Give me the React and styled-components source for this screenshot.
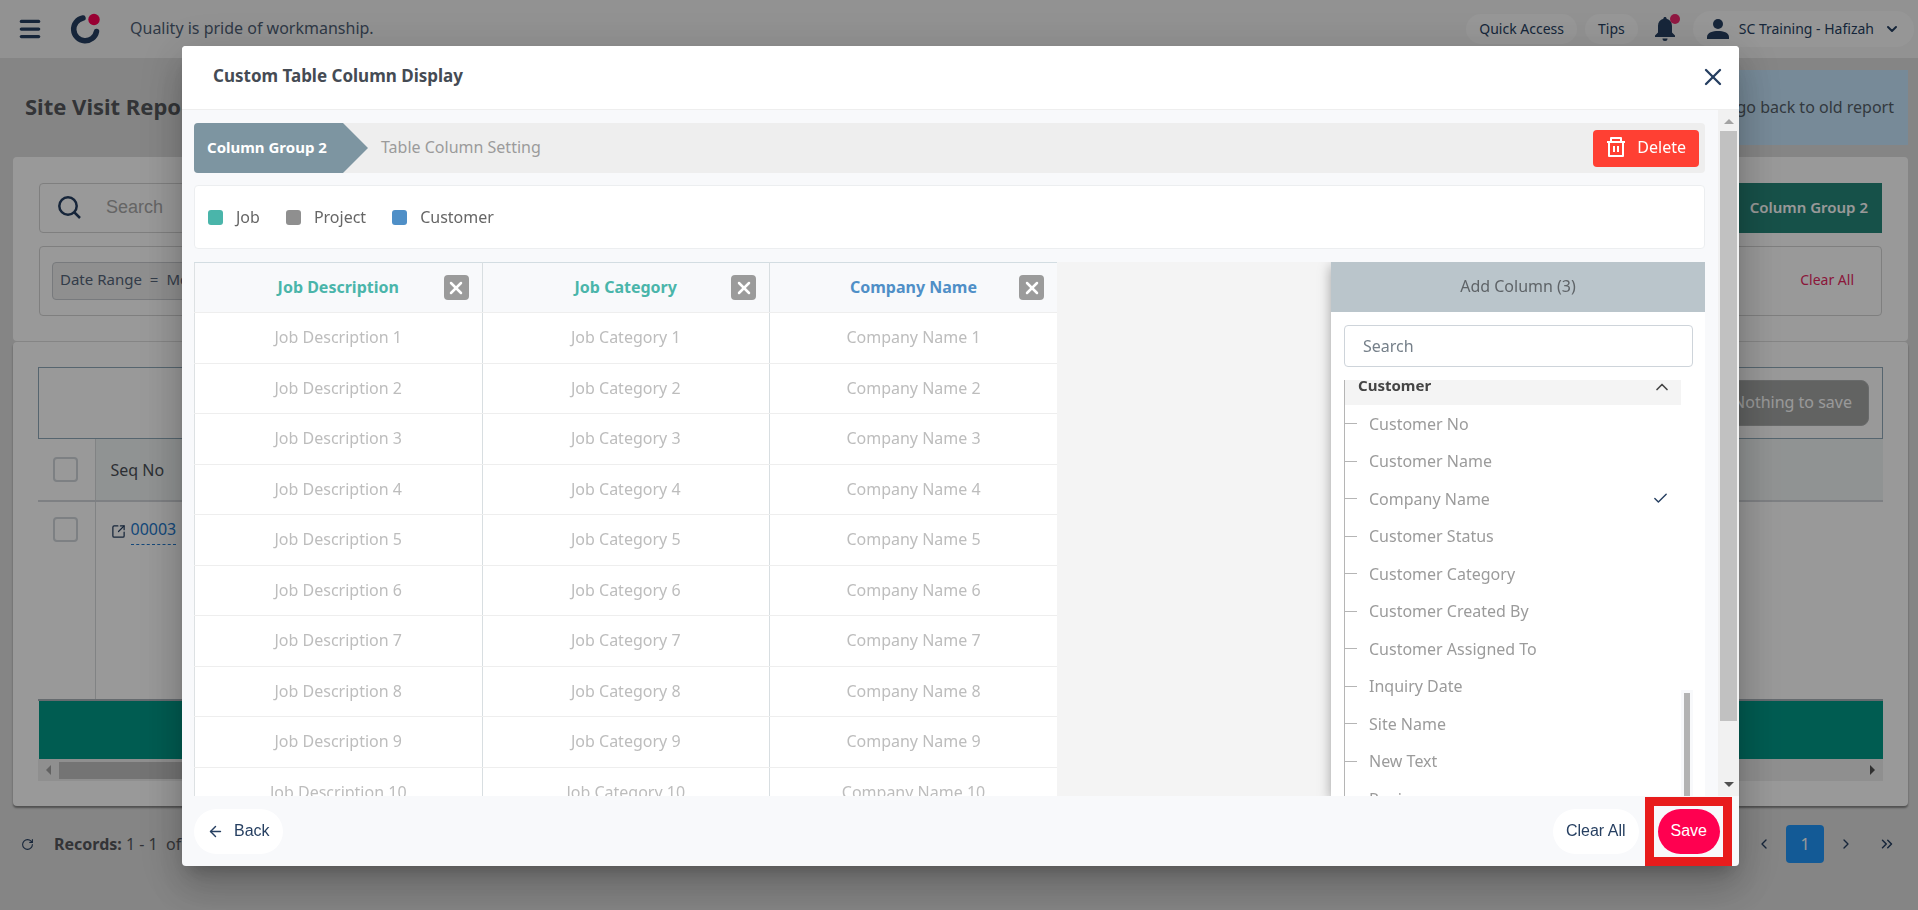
import styled, { createGlobalStyle } from 'styled-components';
import {
  ArrowLeft,
  Check,
  ChevronDown,
  ChevronLeft,
  ChevronRight,
  ChevronsRight,
  ChevronUp,
  Menu,
  RotateCw,
  SquareArrowOutUpRight,
  X,
} from 'lucide-react';

let GlobalStyle = createGlobalStyle`
  * {
    box-sizing: border-box;
  }
  body {
    margin: 0;
    background: #dedede;
    color: #4a4f57;
    font-family: 'Noto Sans', sans-serif;
    font-size: 16px;
    line-height: 24px;
  }
  button, input {
    font-family: inherit;
    font-size: 16px;
  }
  button {
    border: 0;
    padding: 0;
    cursor: pointer;
  }
`;

/* ---------- page behind the dialog ---------- */

let Page = styled.div`
  height: 100vh;
  overflow: hidden;
`;

let TopBar = styled.header`
  display: flex;
  align-items: center;
  height: 58px;
  padding: 0 4px 0 17px;
  background: #f4f4f4;
  color: #263f61;
`;

let IconButton = styled.button`
  display: flex;
  align-items: center;
  justify-content: center;
  background: none;
  color: #263f61;
`;

let Logo = styled.svg`
  width: 32px;
  height: 32px;
  margin: 0 28px 0 27px;
`;

let Tagline = styled.div`
  flex: 1;
  padding-bottom: 2px;
  color: #4f5f75;
`;

let TopActions = styled.div`
  display: flex;
  align-items: center;
`;

let Pill = styled.button`
  height: 30px;
  margin-right: 8px;
  padding: 0 13px 2px;
  border-radius: 15px;
  background: #fbfbfb;
  color: #263f61;
  font-size: 14px;
`;

let BellButton = styled(IconButton)`
  position: relative;
  margin: 0 18px 0 9px;

  &::after {
    content: '';
    position: absolute;
    top: -3px;
    right: -5px;
    width: 10px;
    height: 10px;
    border-radius: 50%;
    background: #f0286e;
  }
`;

let UserButton = styled.button`
  display: flex;
  align-items: center;
  gap: 10px;
  height: 36px;
  padding: 0 14px;
  border-radius: 18px;
  background: #fbfbfb;
  color: #263f61;
  font-size: 14px;

  span {
    padding-bottom: 2px;
  }
`;

let TitleRow = styled.div`
  display: flex;
  justify-content: space-between;
  align-items: center;
  padding: 12px 10px 12px 25px;
`;

let PageTitle = styled.h1`
  margin: 0;
  padding-bottom: 4px;
  font-size: 22px;
  color: #55585c;
`;

let OldReport = styled.a`
  display: flex;
  align-items: center;
  height: 75px;
  padding: 0 14px 2px;
  background: #c6e6fd;
  color: #555f69;
  text-decoration: none;
`;

let Card = styled.section`
  margin: 0 10px 1px 13px;
  border-radius: 4px;
  background: #fff;
`;

let FilterCard = styled(Card)`
  padding: 26px 26px 25px;
`;

let TableCard = styled(Card)`
  padding: 25px;
  box-shadow: 0 2px 2px rgba(0, 0, 0, 0.4);
`;

let SearchRow = styled.div`
  display: flex;
  margin-bottom: 13px;
`;

let SearchField = styled.label`
  flex: 1;
  display: flex;
  align-items: center;
  gap: 25px;
  height: 50px;
  padding: 0 18px 2px;
  border: 1px solid #d4d4d4;
  border-radius: 4px;
  color: #263f61;

  input {
    flex: 1;
    padding: 0;
    border: 0;
    outline: 0;
    background: none;
    font-family: 'Liberation Sans', sans-serif;
    font-size: 18px;
  }
  input::placeholder {
    color: #a8a8a8;
  }
`;

let GroupButton = styled.button`
  padding: 0 14px 2px;
  background: #26877a;
  color: #fff;
  font-size: 15px;
  font-weight: 600;
`;

let FilterBox = styled.div`
  display: flex;
  align-items: center;
  justify-content: space-between;
  height: 70px;
  padding: 0 27px 0 12px;
  border: 1px solid #d4d4d4;
  border-radius: 4px;
`;

let Chip = styled.div`
  display: flex;
  gap: 8px;
  height: 38px;
  padding: 4px 7px;
  border: 1px solid #c9ccd0;
  border-radius: 4px;
  background: #eee;
  color: #55657a;
  font-size: 15px;
`;

let ClearFilters = styled.button`
  padding-bottom: 4px;
  background: none;
  color: #e8275f;
  font-size: 14px;
`;

let SaveBar = styled.div`
  display: flex;
  justify-content: flex-end;
  padding: 12px 13px;
  border: 1px solid #8fa9b9;
`;

let NothingButton = styled.button`
  height: 46px;
  padding: 0 16px 2px;
  border: 1px solid #b0b2b2;
  border-radius: 8px;
  background: #a3a5a4;
  color: #fff;
`;

let ReportTable = styled.table`
  width: 100%;
  border-collapse: collapse;
  border-bottom: 2px solid #aab2ba;

  th, td {
    padding: 0 15px;
    text-align: left;
    font-weight: 400;
  }
  th {
    height: 62px;
    border-bottom: 2px solid #d2d5da;
    background: #f1f5f5;
  }
  td {
    height: 199px;
    padding-top: 15px;
    vertical-align: top;
  }
  th:first-child, td:first-child {
    width: 57px;
    border-right: 1px solid #d7dbdd;
    background: #fff;
    line-height: 0;
  }
`;

let Checkbox = styled.input`
  appearance: none;
  width: 25px;
  height: 25px;
  margin: 0;
  border: 2px solid #d0d5db;
  border-radius: 4px;
`;

let SeqLink = styled.a`
  display: inline-flex;
  align-items: center;
  gap: 5px;
  color: #2378cb;
  text-decoration: none;

  svg {
    color: #263f61;
  }
  span {
    padding-bottom: 3px;
    border-bottom: 1px dashed #2378cb;
  }
`;

let GreenBar = styled.div`
  height: 58px;
  margin-left: 1px;
  background: #009988;
`;

let HScroll = styled.div`
  display: flex;
  align-items: center;
  gap: 8px;
  height: 22px;
  padding: 0 8px;
  background: #eee;
`;

let HThumb = styled.div`
  width: 900px;
  height: 17px;
  margin-right: auto;
  background: #c1c1c1;
`;

let Arrow = styled.i`
  width: 0;
  height: 0;
  border: 5px solid transparent;
  ${(p) => p.$dir === 'left' && 'border-left: 0; border-right-color: #a3a3a3;'}
  ${(p) => p.$dir === 'right' && 'border-right: 0; border-left-color: #505050;'}
  ${(p) => p.$dir === 'up' && 'border-top: 0; border-bottom-color: #a3a3a3;'}
  ${(p) => p.$dir === 'down' && 'border-bottom: 0; border-top-color: #505050;'}
`;

let Pager = styled.div`
  display: flex;
  align-items: center;
  justify-content: space-between;
  padding: 18px 12px 18px 21px;
  color: #55585c;
`;

let PagerGroup = styled.div`
  display: flex;
  align-items: center;
  gap: ${(p) => p.$gap}px;
`;

let LastButton = styled(IconButton)`
  width: 38px;
`;

let PageNumber = styled.button`
  width: 38px;
  height: 38px;
  border-radius: 4px;
  background: #2196fa;
  color: #fff;
`;

/* ---------- dialog ---------- */

let Backdrop = styled.div`
  position: fixed;
  inset: 0;
  display: flex;
  padding: 46px 179px 44px 182px;
  background: rgba(0, 0, 0, 0.4);
`;

let Dialog = styled.div`
  flex: 1;
  display: flex;
  flex-direction: column;
  min-width: 0;
  border-radius: 4px;
  overflow: hidden;
  background: #f8f9fb;
  box-shadow: 0 11px 15px -7px rgba(0, 0, 0, 0.2),
    0 24px 38px 3px rgba(0, 0, 0, 0.14), 0 9px 46px 8px rgba(0, 0, 0, 0.12);
`;

let DialogHeader = styled.div`
  display: flex;
  align-items: center;
  justify-content: space-between;
  height: 64px;
  padding: 0 12px 2px 31px;
  border-bottom: 1px solid #eee;
  background: #fff;
`;

let DialogTitle = styled.h2`
  margin: 0;
  padding-bottom: 2px;
  font-size: 17px;
  color: #454b54;
`;

let DialogBody = styled.div`
  flex: 1;
  display: flex;
  min-height: 0;
`;

let Content = styled.div`
  flex: 1;
  display: flex;
  flex-direction: column;
  min-width: 0;
  padding: 13px 13px 0 12px;
`;

let Steps = styled.div`
  display: flex;
  align-items: center;
  height: 50px;
  padding-right: 6px;
  border-radius: 4px;
  background: #eee;
`;

let CurrentStep = styled.div`
  display: flex;
  align-items: center;
  height: 50px;
  width: 174px;
  padding: 0 0 2px 13px;
  border-radius: 4px 0 0 4px;
  background: #7d95a1;
  clip-path: polygon(0 0, 149px 0, 100% 50%, 149px 100%, 0 100%);
  color: #fff;
  font-size: 15px;
  font-weight: 700;
`;

let NextStep = styled.div`
  flex: 1;
  padding: 0 0 2px 13px;
  color: #9b9b9b;
`;

let DeleteButton = styled.button`
  display: flex;
  align-items: center;
  gap: 11px;
  height: 37px;
  padding: 0 13px 2px;
  border-radius: 4px;
  background: #ff4033;
  color: #fff;
`;

let Legend = styled.div`
  display: flex;
  align-items: center;
  gap: 26px;
  height: 64px;
  margin: 12px 0 13px;
  padding: 0 13px;
  border: 1px solid #eceef0;
  border-radius: 4px;
  background: #fff;
  color: #666;
`;

let LegendItem = styled.div`
  display: flex;
  align-items: center;
  gap: 13px;

  &::before {
    content: '';
    width: 15px;
    height: 15px;
    border-radius: 3px;
    background: ${(p) => p.$color};
  }
`;

let Columns = styled.div`
  flex: 1;
  display: flex;
  min-height: 0;
  overflow: hidden;
  background: #f4f4f4;
`;

let Preview = styled.div`
  flex: 1;
  min-width: 0;
`;

let PreviewTable = styled.table`
  table-layout: fixed;
  width: 863px;
  border-collapse: collapse;
  border-top: 1px solid #d3dde2;
  border-left: 1px solid #dde1e3;
  background: #fff;
  color: #bdbdbd;

  th, td {
    height: 51px;
    padding: 0 0 2px;
    border-bottom: 1px solid #eee;
    text-align: center;
  }
  th + th, td + td {
    border-left: 1px solid #d8dee1;
  }
  th {
    height: 50px;
    padding: 0;
    background: #f8f9fb;
  }
  tbody tr:nth-child(even) td {
    height: 50px;
  }
`;

let ColumnHead = styled.div`
  display: grid;
  grid-template-columns: 1fr auto 1fr;
  align-items: center;
  padding: 0 13px;
  color: ${(p) => p.$color};

  span {
    grid-column: 2;
    padding-bottom: 2px;
  }
`;

let RemoveButton = styled.button`
  justify-self: end;
  display: flex;
  align-items: center;
  justify-content: center;
  width: 25px;
  height: 25px;
  border-radius: 4px;
  background: #9b9b9b;
  color: #fff;
`;

let Side = styled.aside`
  width: 374px;
  background: #fff;
  box-shadow: 0 4px 12px rgba(0, 0, 0, 0.35);
`;

let SideTitle = styled.div`
  height: 50px;
  background: #bac5cb;
  color: #5f6468;
  line-height: 48px;
  text-align: center;
`;

let SideSearch = styled.input`
  display: block;
  width: 349px;
  height: 42px;
  margin: 13px;
  padding: 0 18px;
  border: 1px solid #ced4da;
  border-radius: 4px;

  &::placeholder {
    color: #76808a;
  }
`;

let SideScroll = styled.div`
  display: flex;
  margin: 0 12px 0 13px;
`;

let Tree = styled.ul`
  flex: 1;
  margin: 0;
  padding: 0;
  border-left: 1px solid #b5b5b5;
  list-style: none;
  color: #9b9b9b;
`;

let TreeGroup = styled.button`
  display: flex;
  align-items: flex-end;
  justify-content: space-between;
  width: 100%;
  height: 25px;
  padding: 0 9px 8px 13px;
  background: #f4f4f4;
  color: #444;
  font-size: 15px;
  font-weight: 700;
  line-height: 24px;
`;

let TreeItem = styled.li`
  display: flex;
  align-items: center;
  height: 37px;
  padding: 0 12px 1px 0;

  &:nth-child(even) {
    height: 38px;
  }
  &::before {
    content: '';
    width: 12px;
    height: 1px;
    margin-right: 12px;
    background: #b5b5b5;
  }
  svg {
    margin-left: auto;
    color: #263f61;
  }
`;

let SideTrack = styled.div`
  width: 12px;
  height: 300px;
  margin-top: 310px;
  padding: 3px 3px 0;
  background: #f8f9fb;

  &::before {
    content: '';
    display: block;
    height: 100%;
    background: #b3b3b3;
  }
`;

let VScroll = styled.div`
  display: flex;
  flex-direction: column;
  align-items: center;
  width: 21px;
  padding: 9px 2px;
  background: #f1f1f1;
`;

let VThumb = styled.div`
  width: 17px;
  height: 590px;
  margin: 7px 0 auto;
  background: #c1c1c1;
`;

let DialogFooter = styled.div`
  display: flex;
  align-items: center;
  height: 70px;
  padding: 0 19px 0 12px;
`;

let RoundButton = styled.button`
  display: flex;
  align-items: center;
  gap: 10px;
  height: 45px;
  padding: 0 13px;
  border-radius: 23px;
  background: ${(p) => (p.$primary ? '#ff0050' : '#fff')};
  color: ${(p) => (p.$primary ? '#fff' : '#263f61')};
  font-family: 'Liberation Sans', sans-serif;
`;

let FooterRight = styled.div`
  display: flex;
  gap: 19px;
  margin-left: auto;
`;

let Highlight = styled.div`
  position: relative;

  &::after {
    content: '';
    position: absolute;
    inset: -12px -12px -12px -13px;
    border: 9px solid #e81c1c;
    pointer-events: none;
  }
`;

let teal = '#4ab5aa';
let blue = '#4f8fc7';

let columns = [
  { name: 'Job Description', color: teal },
  { name: 'Job Category', color: teal },
  { name: 'Company Name', color: blue },
];

let rows = [1, 2, 3, 4, 5, 6, 7, 8, 9, 10];

let fields = [
  'Customer No',
  'Customer Name',
  'Company Name',
  'Customer Status',
  'Customer Category',
  'Customer Created By',
  'Customer Assigned To',
  'Inquiry Date',
  'Site Name',
  'New Text',
  'Region',
];

function Header() {
  return (
    <TopBar>
      <IconButton aria-label="Menu">
        <Menu size={26} strokeWidth={3} />
      </IconButton>
      <Logo viewBox="0 0 32 32">
        <path
          d="M13 5A11.500 11.500 0 1 0 26.500 18.500"
          fill="none"
          stroke="#263f61"
          strokeWidth="5.500"
          strokeLinecap="round"
        />
        <circle cx="24" cy="6.500" r="5.700" fill="#ff0055" />
      </Logo>
      <Tagline>Quality is pride of workmanship.</Tagline>
      <TopActions>
        <Pill>Quick Access</Pill>
        <Pill>Tips</Pill>
        <BellButton aria-label="Notifications">
          <svg width="20" height="24" viewBox="0 0 20 24" fill="currentColor">
            <path d="M10 0c1 0 1.600.7 1.600 1.700C15 2.500 17 5 17 9v6.500l3 3V20H0v-1.500l3-3V9c0-4 2-6.500 5.400-7.300C8.400.7 9 0 10 0zM7.500 21.500h5A2.500 2.500 0 0 1 10 24a2.500 2.500 0 0 1-2.500-2.500z" />
          </svg>
        </BellButton>
        <UserButton>
          <svg width="22" height="20" viewBox="0 0 22 20" fill="currentColor">
            <circle cx="11" cy="5" r="5" />
            <path d="M0 20v-2c0-4.500 6-6 11-6s11 1.500 11 6v2z" />
          </svg>
          <span>SC Training - Hafizah</span>
          <ChevronDown size={16} strokeWidth={3} />
        </UserButton>
      </TopActions>
    </TopBar>
  );
}

function Report() {
  return (
    <>
      <TitleRow>
        <PageTitle>Site Visit Report</PageTitle>
        <OldReport href="#old">Click here to go back to old report</OldReport>
      </TitleRow>
      <FilterCard>
        <SearchRow>
          <SearchField>
            <svg
              width="23"
              height="24"
              viewBox="0 0 23 24"
              fill="none"
              stroke="currentColor"
              strokeWidth="2.500"
            >
              <circle cx="10" cy="11" r="8.700" />
              <path d="M16 17l6 6" />
            </svg>
            <input placeholder="Search" aria-label="Search reports" />
          </SearchField>
          <GroupButton>Column Group 2</GroupButton>
        </SearchRow>
        <FilterBox>
          <Chip>
            <span>Date Range</span>
            <span>=</span>
            <span>Month to date</span>
          </Chip>
          <ClearFilters>Clear All</ClearFilters>
        </FilterBox>
      </FilterCard>
      <TableCard>
        <SaveBar>
          <NothingButton>Nothing to save</NothingButton>
        </SaveBar>
        <ReportTable>
          <thead>
            <tr>
              <th>
                <Checkbox type="checkbox" aria-label="Select all" />
              </th>
              <th>Seq No</th>
            </tr>
          </thead>
          <tbody>
            <tr>
              <td>
                <Checkbox type="checkbox" aria-label="Select 00003" />
              </td>
              <td>
                <SeqLink href="#00003">
                  <SquareArrowOutUpRight size={15} />
                  <span>00003</span>
                </SeqLink>
              </td>
            </tr>
          </tbody>
        </ReportTable>
        <GreenBar />
        <HScroll>
          <Arrow $dir="left" />
          <HThumb />
          <Arrow $dir="right" />
        </HScroll>
      </TableCard>
      <Pager>
        <PagerGroup $gap={20}>
          <IconButton aria-label="Refresh">
            <RotateCw size={13} />
          </IconButton>
          <span>
            <b>Records:</b> 1 - 1 &nbsp;of 1
          </span>
        </PagerGroup>
        <PagerGroup $gap={14}>
          <IconButton aria-label="Previous">
            <ChevronLeft size={16} />
          </IconButton>
          <PageNumber>1</PageNumber>
          <IconButton aria-label="Next">
            <ChevronRight size={16} />
          </IconButton>
          <LastButton aria-label="Last">
            <ChevronsRight size={18} />
          </LastButton>
        </PagerGroup>
      </Pager>
    </>
  );
}

function ColumnPreview() {
  return (
    <Preview>
      <PreviewTable>
        <thead>
          <tr>
            {columns.map((column) => (
              <th key={column.name}>
                <ColumnHead $color={column.color}>
                  <span>{column.name}</span>
                  <RemoveButton aria-label={`Remove ${column.name}`}>
                    <X size={20} strokeWidth={3} />
                  </RemoveButton>
                </ColumnHead>
              </th>
            ))}
          </tr>
        </thead>
        <tbody>
          {rows.map((row) => (
            <tr key={row}>
              {columns.map((column) => (
                <td key={column.name}>
                  {column.name} {row}
                </td>
              ))}
            </tr>
          ))}
        </tbody>
      </PreviewTable>
    </Preview>
  );
}

function AddColumn() {
  return (
    <Side>
      <SideTitle>Add Column (3)</SideTitle>
      <SideSearch placeholder="Search" aria-label="Search columns" />
      <SideScroll>
        <Tree>
          <li>
            <TreeGroup>
              Customer
              <ChevronUp size={20} />
            </TreeGroup>
          </li>
          {fields.map((field) => (
            <TreeItem key={field}>
              {field}
              {field === 'Company Name' && <Check size={17} />}
            </TreeItem>
          ))}
        </Tree>
        <SideTrack />
      </SideScroll>
    </Side>
  );
}

function ColumnDialog() {
  return (
    <Dialog role="dialog" aria-labelledby="dialog-title">
      <DialogHeader>
        <DialogTitle id="dialog-title">Custom Table Column Display</DialogTitle>
        <IconButton aria-label="Close">
          <X size={28} strokeWidth={2} />
        </IconButton>
      </DialogHeader>
      <DialogBody>
        <Content>
          <Steps>
            <CurrentStep>Column Group 2</CurrentStep>
            <NextStep>Table Column Setting</NextStep>
            <DeleteButton>
              <svg
                width="20"
                height="20"
                viewBox="0 0 20 20"
                fill="none"
                stroke="currentColor"
                strokeWidth="2"
                strokeLinejoin="round"
              >
                <path d="M1 5h18M3 5v14h14V5M5 5V1h10v4M8 9v6M12 9v6" />
              </svg>
              Delete
            </DeleteButton>
          </Steps>
          <Legend>
            <LegendItem $color={teal}>Job</LegendItem>
            <LegendItem $color="#8f8f8f">Project</LegendItem>
            <LegendItem $color={blue}>Customer</LegendItem>
          </Legend>
          <Columns>
            <ColumnPreview />
            <AddColumn />
          </Columns>
        </Content>
        <VScroll>
          <Arrow $dir="up" />
          <VThumb />
          <Arrow $dir="down" />
        </VScroll>
      </DialogBody>
      <DialogFooter>
        <RoundButton>
          <ArrowLeft size={17} />
          Back
        </RoundButton>
        <FooterRight>
          <RoundButton>Clear All</RoundButton>
          <Highlight>
            <RoundButton $primary>Save</RoundButton>
          </Highlight>
        </FooterRight>
      </DialogFooter>
    </Dialog>
  );
}

function App() {
  return (
    <>
      <GlobalStyle />
      <Page>
        <Header />
        <Report />
      </Page>
      <Backdrop>
        <ColumnDialog />
      </Backdrop>
    </>
  );
}

export default App;
